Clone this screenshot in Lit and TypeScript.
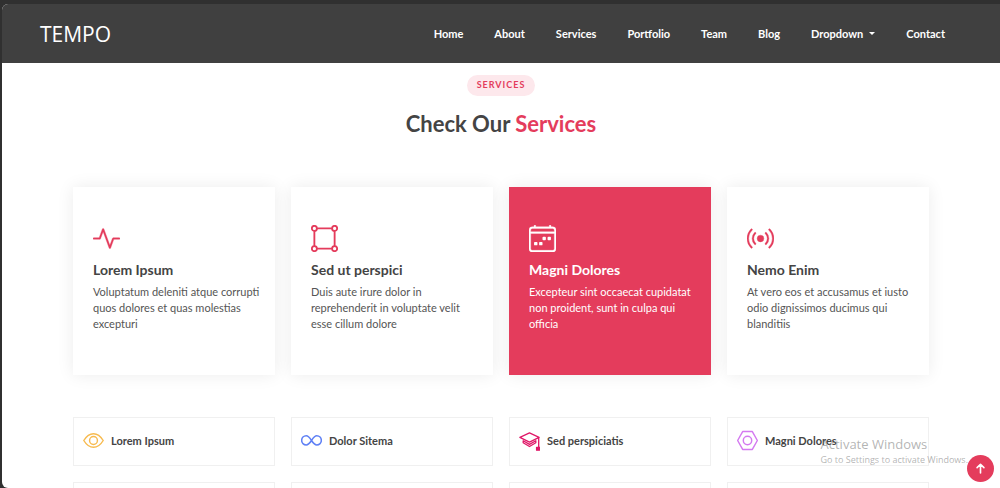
import { LitElement, html, css, svg } from "lit";
import { customElement } from "lit/decorators.js";

const icons = {
  activity: svg`<path fill="currentColor" stroke="currentColor" stroke-width=".2" d="M6 2a.5.5 0 0 1 .47.33L10 12.036l1.53-4.208A.5.5 0 0 1 12 7.5h3.5a.5.5 0 0 1 0 1h-3.15l-1.88 5.17a.5.5 0 0 1-.94 0L6 3.964 4.47 8.171A.5.5 0 0 1 4 8.5H.5a.5.5 0 0 1 0-1h3.15l1.88-5.17A.5.5 0 0 1 6 2Z"/>`,
  box: svg`<g fill="none" stroke="currentColor" stroke-width="1.100"><path d="M3.5 2h9M3.5 14h9M2 3.5v9M14 3.5v9"/><circle cx="2" cy="2" r="1.5"/><circle cx="14" cy="2" r="1.5"/><circle cx="2" cy="14" r="1.5"/><circle cx="14" cy="14" r="1.5"/></g>`,
  calendar: svg`<g fill="currentColor"><path stroke="currentColor" stroke-width=".2" d="M3.5 0a.5.5 0 0 1 .5.5V1h8V.5a.5.5 0 0 1 1 0V1h1a2 2 0 0 1 2 2v11a2 2 0 0 1-2 2H2a2 2 0 0 1-2-2V3a2 2 0 0 1 2-2h1V.5a.5.5 0 0 1 .5-.5zM2 2a1 1 0 0 0-1 1v1h14V3a1 1 0 0 0-1-1H2zm13 3H1v9a1 1 0 0 0 1 1h12a1 1 0 0 0 1-1V5z"/><rect x="11" y="7" width="2" height="2" rx=".5"/><rect x="8" y="7" width="2" height="2" rx=".5"/><rect x="3" y="10" width="2" height="2" rx=".5"/><rect x="6" y="10" width="2" height="2" rx=".5"/></g>`,
  broadcast: svg`<path fill="currentColor" stroke="currentColor" stroke-width=".2" d="M3.05 3.05a7 7 0 0 0 0 9.9.5.5 0 0 1-.707.707 8 8 0 0 1 0-11.314.5.5 0 0 1 .707.707zm2.122 2.122a4 4 0 0 0 0 5.656.5.5 0 1 1-.708.708 5 5 0 0 1 0-7.072.5.5 0 0 1 .708.708zm5.656-.708a.5.5 0 0 1 .708 0 5 5 0 0 1 0 7.072.5.5 0 1 1-.708-.708 4 4 0 0 0 0-5.656.5.5 0 0 1 0-.708zm2.122-2.12a.5.5 0 0 1 .707 0 8 8 0 0 1 0 11.313.5.5 0 0 1-.707-.707 7 7 0 0 0 0-9.9.5.5 0 0 1 0-.707zM10 8a2 2 0 1 1-4 0 2 2 0 0 1 4 0z"/>`,
  eye: svg`<g fill="none" stroke="currentColor" stroke-width="1.100"><path d="M.6 8C2.3 5.2 4.9 2.800 8 2.800s5.700 2.400 7.400 5.200c-1.700 2.800-4.300 5.200-7.400 5.200S2.300 10.800.6 8z"/><circle cx="8" cy="8" r="3"/></g>`,
  infinity: svg`<path fill="none" stroke="currentColor" stroke-width="1.200" d="M8 8C6.700 6 5.700 4.400 4 4.400a3.500 3.500 0 0 0 0 7C5.700 11.400 6.700 10 8 8s2.300-3.600 4-3.600a3.500 3.500 0 0 1 0 7C10.300 11.400 9.300 10 8 8z"/>`,
  cap: svg`<g fill="none" stroke="currentColor" stroke-linejoin="round"><path d="M8 2.200.7 5.600 8 9.200l7.300-3.600z"/><path d="M3.200 8.200v1.500L8 12.600l4.800-2.900V8.200L8 10.900z"/><path d="M15 5.800v8"/><rect x="13.400" y="13.200" width="2.200" height="2.200" fill="currentColor"/></g>`,
  nut: svg`<g fill="none" stroke="currentColor" stroke-width="1.100" stroke-linejoin="round"><path d="M4.300 1.200h7.400L15.500 8l-3.800 6.800H4.300L.5 8z"/><circle cx="8" cy="8" r="3.200"/></g>`,
  arrow: svg`<path fill="none" stroke="currentColor" stroke-width="2" stroke-linecap="round" stroke-linejoin="round" d="M8 13.500V2.800M3.800 7 8 2.800 12.200 7"/>`,
};

type IconName = keyof typeof icons;

const icon = (name: IconName) =>
  html`<svg viewBox="0 0 16 16" aria-hidden="true">${icons[name]}</svg>`;

const links = ["Home", "About", "Services", "Portfolio", "Team", "Blog"];

const services: { icon: IconName; title: string; text: string; active?: boolean }[] = [
  { icon: "activity", title: "Lorem Ipsum", text: "Voluptatum deleniti atque corrupti quos dolores et quas molestias excepturi" },
  { icon: "box", title: "Sed ut perspici", text: "Duis aute irure dolor in reprehenderit in voluptate velit esse cillum dolore" },
  { icon: "calendar", title: "Magni Dolores", text: "Excepteur sint occaecat cupidatat non proident, sunt in culpa qui officia", active: true },
  { icon: "broadcast", title: "Nemo Enim", text: "At vero eos et accusamus et iusto odio dignissimos ducimus qui blanditiis" },
];

const features: { icon: IconName; title: string }[] = [
  { icon: "eye", title: "Lorem Ipsum" },
  { icon: "infinity", title: "Dolor Sitema" },
  { icon: "cap", title: "Sed perspiciatis" },
  { icon: "nut", title: "Magni Dolores" },
];

@customElement("app-root")
export class AppRoot extends LitElement {
  static styles = css`
    :host {
      display: block;
      position: relative;
      box-sizing: border-box;
      height: 100vh;
      overflow: hidden;
      padding: 4px 0 0 2px;
      background: #303030;
      color: #444;
      font-family: "Lato", "Open Sans", sans-serif;
    }
    * { box-sizing: border-box; }
    a { color: inherit; text-decoration: none; }
    h1, h2, h3, p { margin: 0; }
    svg { display: block; width: 100%; height: 100%; }
    .page {
      height: 100%;
      overflow: hidden;
      background: #fff;
      border-radius: 6px 0 0 6px;
    }
    .header {
      display: flex;
      align-items: center;
      justify-content: space-between;
      height: 59px;
      padding: 0 55px 0 38px;
      background: #404040;
      color: #fff;
    }
    .logo { font-family: "Open Sans", sans-serif; font-size: 21px; line-height: 28px; }
    .nav { display: flex; gap: 31px; font-size: 11px; font-weight: 700; line-height: 16px; }
    .drop { display: flex; align-items: center; gap: 6px; }
    .caret { border: 3px solid transparent; border-top-color: #fff; border-bottom: 0; }
    .content {
      max-width: 888px;
      margin: 0 auto;
      padding: 12px 16px;
    }
    .title { display: flex; flex-direction: column; align-items: center; gap: 12px; }
    .badge {
      padding: 0 10px 1px;
      border-radius: 12px;
      background: #fde8ec;
      color: #e43c5c;
      font-size: 9px;
      font-weight: 700;
      line-height: 20px;
      letter-spacing: 1px;
      text-transform: uppercase;
    }
    .heading { font-size: 22px; font-weight: 700; line-height: 32px; }
    .accent { color: #e43c5c; }
    .grid { display: grid; grid-template-columns: repeat(4, minmax(0, 1fr)); gap: 16px; }
    .cards { margin-top: 47px; }
    .card {
      padding: 38px 14px 43px 20px;
      background: #fff;
      box-shadow: 0 0 16px rgba(0, 0, 0, 0.08);
    }
    .card.active { background: #e43c5c; color: #fff; }
    .card-icon { width: 27px; height: 27px; color: #e43c5c; }
    .active .card-icon { color: #fff; }
    .card-title { margin: 8px 0 4px; font-size: 14px; font-weight: 700; line-height: 20px; }
    .card-text { color: #555; font-size: 11px; line-height: 16px; }
    .active .card-text { color: #fff; }
    .features { margin-top: 42px; }
    .feature {
      display: flex;
      align-items: center;
      gap: 7px;
      height: 49px;
      padding: 0 9px 2px;
      border: 1px solid #f0f0f0;
    }
    .feature-icon { flex: none; width: 21px; height: 21px; }
    .eye { color: #f7bb50; }
    .infinity { color: #5f80f5; }
    .cap { color: #e01868; }
    .nut { color: #d47af0; }
    .feature-title { font-size: 11px; font-weight: 700; line-height: 16px; }
    .notice {
      position: absolute;
      right: 32px;
      bottom: 21px;
      color: rgba(130, 130, 130, 0.6);
      font-family: "Open Sans", sans-serif;
      pointer-events: none;
    }
    .notice-title { font-size: 13px; line-height: 18px; }
    .notice-text { font-size: 9px; line-height: 14px; }
    .top {
      position: absolute;
      right: 6px;
      bottom: 6px;
      display: grid;
      place-items: center;
      width: 27px;
      height: 27px;
      padding: 0;
      border: 0;
      border-radius: 50%;
      background: #e43c5c;
      color: #fff;
    }
    .arrow { width: 13px; height: 13px; }
  `;

  render() {
    return html`
      <div class="page">
        <header class="header">
          <a class="logo" href="#">TEMPO</a>
          <nav class="nav">
            ${links.map((l) => html`<a href="#">${l}</a>`)}
            <a class="drop" href="#">Dropdown<span class="caret"></span></a>
            <a href="#">Contact</a>
          </nav>
        </header>
        <main class="content">
          <div class="title">
            <span class="badge">Services</span>
            <h2 class="heading">Check Our <span class="accent">Services</span></h2>
          </div>
          <section class="grid cards">
            ${services.map((s) => html`
              <article class="card ${s.active ? "active" : ""}">
                <div class="card-icon">${icon(s.icon)}</div>
                <h3 class="card-title">${s.title}</h3>
                <p class="card-text">${s.text}</p>
              </article>`)}
          </section>
          <section class="grid features">
            ${features.map((f) => html`
              <div class="feature">
                <div class="feature-icon ${f.icon}">${icon(f.icon)}</div>
                <h3 class="feature-title"><a href="#">${f.title}</a></h3>
              </div>`)}
            ${features.map(() => html`<div class="feature"></div>`)}
          </section>
        </main>
      </div>
      <div class="notice">
        <p class="notice-title">Activate Windows</p>
        <p class="notice-text">Go to Settings to activate Windows.</p>
      </div>
      <button class="top" aria-label="Back to top"><span class="arrow">${icon("arrow")}</span></button>
    `;
  }
}
